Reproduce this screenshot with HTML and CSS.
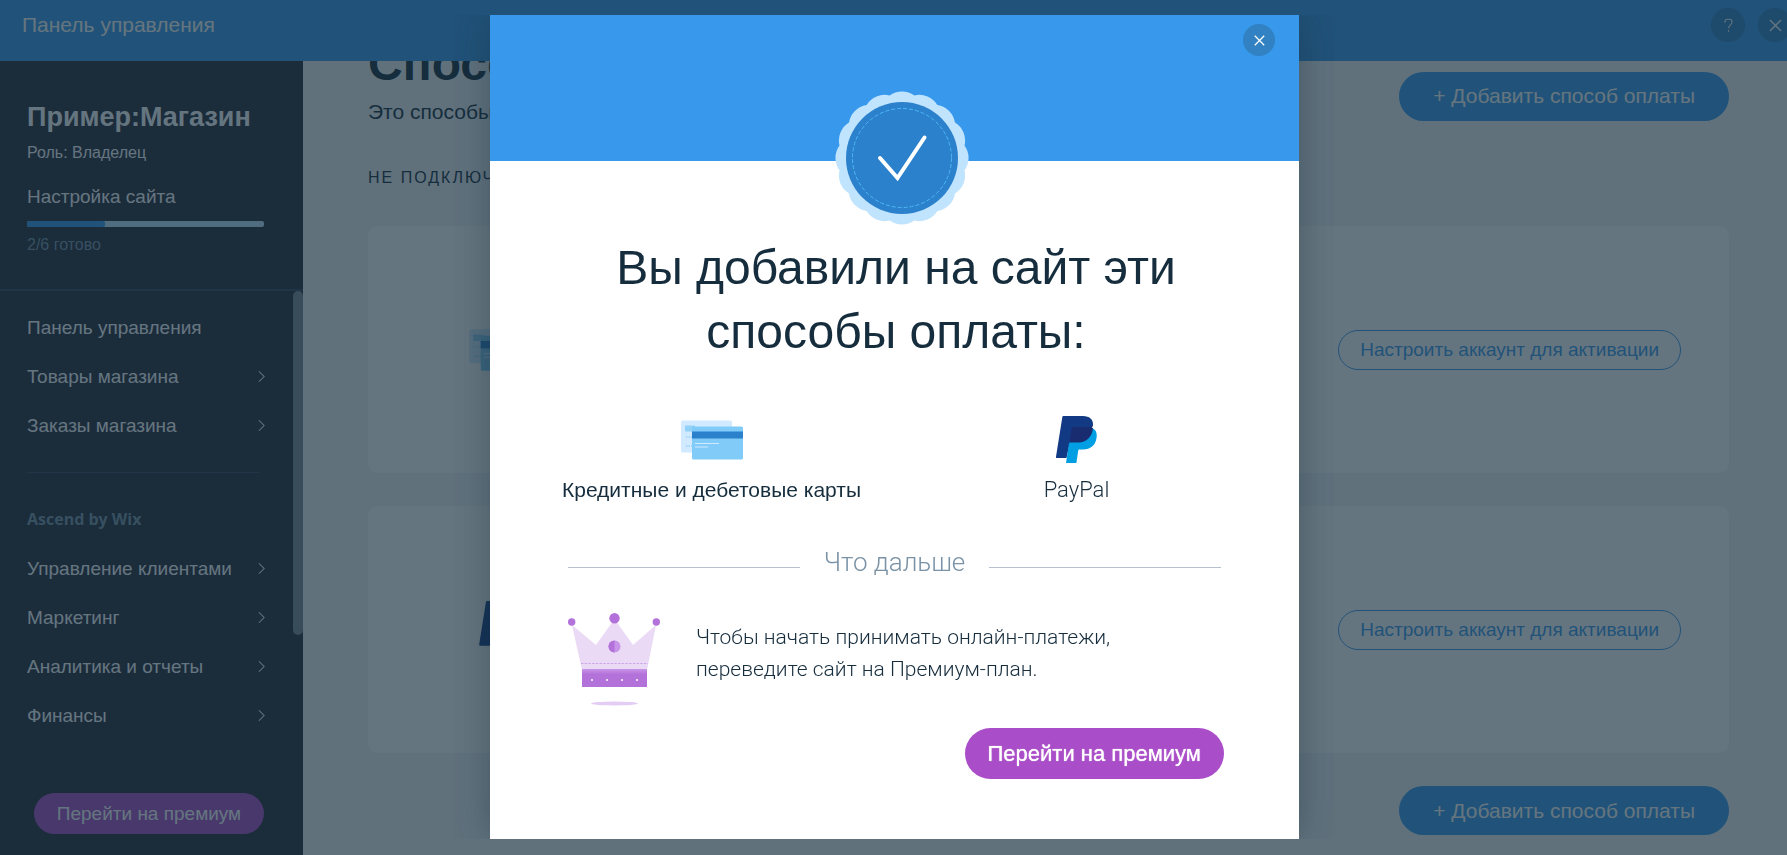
FILE: index.html
```html
<!DOCTYPE html>
<html lang="ru">
	<head>
		<meta charset="UTF-8" />
		<meta name="viewport" content="width=device-width, initial-scale=1.0" />
		<title>Панель управления</title>
		<link rel="stylesheet" href="styles.css">
	</head>

	<body>
		<!-- shared icons -->
		<svg class="sprite" aria-hidden="true">
			<symbol id="icon-chevron" viewBox="0 0 8 14">
				<path d="M1 1l6 6-6 6" fill="none" stroke="currentColor" stroke-width="1.2" />
			</symbol>
			<symbol id="icon-close" viewBox="0 0 14 14">
				<path d="M1 1l12 12M13 1L1 13" fill="none" stroke="currentColor" stroke-width="1.6" />
			</symbol>
			<symbol id="icon-cards" viewBox="0 0 62 39">
				<rect width="51" height="32" rx="1.5" fill="#d2eaff" />
				<rect x="4" y="5" width="10" height="6" fill="#92d2f9" />
				<path d="M5 16.5h7M5 25.5h7" stroke="#a9dafa" stroke-width="2" stroke-dasharray="1.5 1" />
				<rect x="11" y="6" width="51" height="33" rx="1.5" fill="#80cbf8" />
				<rect x="11" y="11" width="51" height="7" fill="#2b81cb" />
				<path d="M14 23h24M14 26.5h13" stroke="#d2eaff" stroke-width="1.2" />
			</symbol>
			<symbol id="icon-paypal" viewBox="0 0 41 48">
				<path d="M7.5 0H27c7 0 10.5 4 10 9.500L30 24 14 26l-3.500 16H1a1 1 0 0 1-1-1.200L6.300 1.200C6.400.5 6.800 0 7.500 0z" fill="#123984" />
				<path d="M37 12.500c3.400 1.500 4.200 5.500 3.500 9.500-1.200 7.500-6 11.500-13.500 11.500h-3.500c-.8 0-1.200.5-1.300 1.300l-1.800 12.200H10l3.200-21z" fill="#009ee3" />
				<path d="M17 11h16.500c1.500 0 2.500.4 3.500 1.300C36 21 30.500 26.500 22.500 26.500h-7.200c-1.200 0-1.900.5-2.100 1.500l2.500-15.800c.1-.7.600-1.200 1.300-1.200z" fill="#192c6f" />
			</symbol>
		</svg>

		<header class="topbar">
			<span class="topbar-title">Панель управления</span>
			<div class="topbar-actions">
				<button class="round-btn" type="button" aria-label="Помощь">
					<svg class="icon-help" viewBox="0 0 10 16">
						<path d="M1 5V4a3 3 0 0 1 3-3h2a3 3 0 0 1 3 3c0 3-4 3.500-4 7M5 13v2" fill="none" stroke="currentColor" stroke-width="1.200" />
					</svg>
				</button>
				<button class="round-btn" type="button" aria-label="Закрыть">
					<svg class="icon-close"><use href="#icon-close" /></svg>
				</button>
			</div>
		</header>

		<div class="layout">
			<aside class="sidebar">
				<div class="site">
					<h2 class="site-name">Пример:Магазин</h2>
					<p class="site-role">Роль: Владелец</p>
					<p class="site-setup">Настройка сайта</p>
					<div class="progress"><div class="progress-fill"></div></div>
					<p class="site-done">2/6 готово</p>
				</div>

				<nav class="menu">
					<a class="menu-item" href="#">Панель управления</a>
					<a class="menu-item" href="#">Товары магазина <svg class="chevron"><use href="#icon-chevron" /></svg></a>
					<a class="menu-item" href="#">Заказы магазина <svg class="chevron"><use href="#icon-chevron" /></svg></a>
					<hr class="menu-line" />
					<h3 class="menu-title">Ascend by Wix</h3>
					<a class="menu-item" href="#">Управление клиентами <svg class="chevron"><use href="#icon-chevron" /></svg></a>
					<a class="menu-item" href="#">Маркетинг <svg class="chevron"><use href="#icon-chevron" /></svg></a>
					<a class="menu-item" href="#">Аналитика и отчеты <svg class="chevron"><use href="#icon-chevron" /></svg></a>
					<a class="menu-item" href="#">Финансы <svg class="chevron"><use href="#icon-chevron" /></svg></a>
					<div class="scroll-thumb"></div>
				</nav>

				<button class="sidebar-btn" type="button">Перейти на премиум</button>
			</aside>

			<main class="content">
				<div class="content-head">
					<div>
						<h1 class="content-title">Способы оплаты</h1>
						<p class="content-text">Это способы оплаты на сайте.</p>
					</div>
					<button class="add-btn" type="button">+ Добавить способ оплаты</button>
				</div>
				<h2 class="section-title">Не подключено</h2>
				<div class="card">
					<svg class="cards-icon"><use href="#icon-cards" /></svg>
					<button class="setup-btn" type="button">Настроить аккаунт для активации</button>
				</div>
				<div class="card">
					<svg class="paypal-icon"><use href="#icon-paypal" /></svg>
					<button class="setup-btn" type="button">Настроить аккаунт для активации</button>
				</div>
				<button class="add-btn" type="button">+ Добавить способ оплаты</button>
			</main>
		</div>

		<div class="overlay">
			<div class="modal" role="dialog" aria-modal="true" aria-labelledby="modal-title">
				<div class="modal-head">
					<button class="modal-close" type="button" aria-label="Закрыть">
						<svg class="icon-close-small"><use href="#icon-close" /></svg>
					</button>
					<svg class="badge" viewBox="0 0 134 134">
						<path d="M54.6 4.500A21 21 0 0 1 79.400 4.500A21 21 0 0 1 102.400 14A21 21 0 0 1 120 31.600A21 21 0 0 1 129.500 54.600A21 21 0 0 1 129.500 79.400A21 21 0 0 1 120 102.400A21 21 0 0 1 102.400 120A21 21 0 0 1 79.400 129.500A21 21 0 0 1 54.600 129.500A21 21 0 0 1 31.600 120A21 21 0 0 1 14 102.400A21 21 0 0 1 4.500 79.400A21 21 0 0 1 4.500 54.600A21 21 0 0 1 14 31.600A21 21 0 0 1 31.600 14A21 21 0 0 1 54.600 4.500z" fill="#c1e4fe" />
						<circle cx="67" cy="67" r="56" fill="#2b81cb" />
						<circle cx="67" cy="67" r="49.5" fill="none" stroke="#4eb7f5" stroke-dasharray="4 2" />
						<path d="M45 67l17.5 20L89.5 46.5" fill="none" stroke="#fff" stroke-width="4" stroke-linecap="round" />
					</svg>
				</div>

				<div class="modal-body">
					<h2 class="modal-title" id="modal-title">Вы добавили на сайт эти способы оплаты:</h2>

					<div class="methods">
						<div class="method">
							<svg class="cards-icon"><use href="#icon-cards" /></svg>
							<span>Кредитные и дебетовые карты</span>
						</div>
						<div class="method">
							<svg class="paypal-icon"><use href="#icon-paypal" /></svg>
							<span class="method-light">PayPal</span>
						</div>
					</div>

					<div class="next">Что дальше</div>

					<div class="premium">
						<svg class="crown" viewBox="0 0 92 93">
							<defs>
								<linearGradient id="band" x1="0" y1="0" x2="0" y2="1">
									<stop offset="0" stop-color="#c795e8" />
									<stop offset=".3" stop-color="#b371da" />
								</linearGradient>
							</defs>
							<path d="M4 12L28 32 46.5 6 65 32 88 12 79 57H14z" fill="#ebdaf6" />
							<circle cx="3.7" cy="9" r="3.7" fill="#b371da" />
							<circle cx="88.3" cy="9" r="3.7" fill="#b371da" />
							<circle cx="46.5" cy="5.2" r="5.2" fill="#b371da" />
							<circle cx="46.5" cy="33.5" r="6" fill="#c794e8" />
							<path d="M46.5 27.5a6 6 0 0 0 0 12z" fill="#b371da" />
							<path d="M13 50.5h67" stroke="#cfa6ea" stroke-dasharray="2.5 1.2" />
							<rect x="14" y="56" width="65" height="18" fill="url(#band)" />
							<path d="M23 67h2M38 67h2M53 67h2M68 67h2" stroke="#ebdaf6" stroke-width="2" />
							<ellipse cx="46.5" cy="90.5" rx="23.5" ry="2" fill="#e3cdf4" />
						</svg>
						<p class="premium-text">Чтобы начать принимать онлайн-платежи, переведите сайт на Премиум-план.</p>
					</div>

					<button class="premium-btn" type="button">Перейти на премиум</button>
				</div>
			</div>
		</div>
	</body>
</html>
```

FILE: styles.css
```css
* {
	box-sizing: border-box;
}

html,
body {
	height: 100%;
	margin: 0;
	overflow: hidden;
}

body {
	display: flex;
	flex-direction: column;
	color: #162d3d;
	font-family: "Liberation Sans", Arial, sans-serif;
	background-color: #f0f4f7;
}

h1,
h2,
h3,
p {
	margin: 0;
}

button {
	border: 0;
	padding: 0;
	font-family: inherit;
	cursor: pointer;
}

.sprite {
	position: absolute;
	width: 0;
	height: 0;
}

/* top bar */

.topbar {
	position: relative;
	z-index: 1;
	display: flex;
	flex-shrink: 0;
	justify-content: space-between;
	align-items: flex-start;
	height: 61px;
	padding: 8px 0 0 22px;
	color: #fff;
	background-color: #3899ec;
}

.topbar-title {
	font-size: 21px;
	line-height: 34px;
}

.topbar-actions {
	display: flex;
	gap: 13px;
	margin-right: -5px;
}

.round-btn {
	display: flex;
	justify-content: center;
	align-items: center;
	width: 34px;
	height: 34px;
	border-radius: 50%;
	color: #fff;
	background-color: #2f81c6;
}

.icon-help {
	width: 9px;
	height: 15px;
}

.icon-close {
	width: 13px;
	height: 13px;
}

/* sidebar */

.layout {
	display: flex;
	flex: 1;
	min-height: 0;
}

.sidebar {
	display: flex;
	flex-direction: column;
	flex-shrink: 0;
	width: 303px;
	color: #fff;
	background-color: #26293a;
}

.site {
	padding: 38px 39px 32px 27px;
	border-bottom: 2px solid #3a4562;
}

.site-name {
	font-size: 27px;
	line-height: 36px;
}

.site-role {
	margin-top: 6px;
	font-size: 16px;
	line-height: 24px;
}

.site-setup {
	margin-top: 20px;
	font-size: 19px;
	line-height: 24px;
}

.progress {
	height: 6px;
	margin-top: 12px;
	border-radius: 2px;
	background-color: #c1e4fe;
}

.progress-fill {
	width: 33%;
	height: 100%;
	border-radius: 2px;
	background-color: #3899ec;
}

.site-done {
	margin-top: 6px;
	color: #7a92a5;
	font-size: 16px;
	line-height: 24px;
}

.menu {
	position: relative;
	flex: 1;
	padding: 12px 38px 0 27px;
}

.menu-item {
	display: flex;
	justify-content: space-between;
	align-items: center;
	height: 49px;
	color: #fff;
	font-size: 19px;
	text-decoration: none;
}

.chevron {
	width: 7px;
	height: 13px;
}

.menu-line {
	height: 1px;
	margin: 22px 5px 22px 0;
	border: 0;
	background-color: #3a4562;
}

.menu-title {
	color: #7a92a5;
	font-family: "Open Sans", sans-serif;
	font-size: 16px;
	font-weight: 700;
	line-height: 49px;
}

.scroll-thumb {
	position: absolute;
	top: 0;
	right: 0;
	width: 10px;
	height: 344px;
	border-radius: 5px;
	background-color: #7f8690;
}

.sidebar-btn {
	height: 41px;
	margin: 0 39px 21px 34px;
	border-radius: 21px;
	color: #fff;
	font-size: 19px;
	background-color: #aa4dc8;
}

/* page content */

.content {
	flex: 1;
	min-width: 0;
	padding: 0 58px 0 65px;
	margin-top: -29px;
}

.content-head {
	display: flex;
	justify-content: space-between;
	align-items: center;
}

.content-title {
	font-size: 48px;
	line-height: 64px;
}

.content-text {
	font-size: 21px;
	line-height: 32px;
}

.add-btn {
	display: block;
	height: 49px;
	margin-left: auto;
	padding: 0 34px;
	border-radius: 25px;
	color: #fff;
	font-size: 21px;
	background-color: #3899ec;
}

.content-head .add-btn {
	margin-top: 32px;
}

.section-title {
	margin: 38px 0 36px;
	font-size: 16px;
	font-weight: 400;
	letter-spacing: 2px;
	line-height: 24px;
	text-transform: uppercase;
}

.card {
	display: flex;
	justify-content: space-between;
	align-items: center;
	height: 247px;
	margin-bottom: 33px;
	padding: 0 48px 0 101px;
	border-radius: 10px;
	background-color: #fff;
}

.cards-icon {
	width: 62px;
	height: 39px;
}

.paypal-icon {
	width: 41px;
	height: 48px;
}

.card .cards-icon {
	width: 66px;
	height: 42px;
}

.card .paypal-icon {
	width: 44px;
	height: 51px;
	margin: 0 0 6px 10px;
}

.setup-btn {
	height: 40px;
	padding: 0 21px;
	border: 1px solid #3899ec;
	border-radius: 20px;
	color: #3899ec;
	font-size: 19px;
	background-color: transparent;
}

/* modal */

.overlay {
	position: fixed;
	inset: 0;
	z-index: 2;
	display: flex;
	justify-content: center;
	align-items: flex-start;
	padding: 15px 14px 16px 16px;
	background-color: rgba(22, 45, 61, 0.66);
}

.modal {
	width: 809px;
	background-color: #fff;
	box-shadow: 0 0 36px rgba(22, 45, 61, 0.4);
	clip-path: inset(0 -36px);
}

.modal-head {
	position: relative;
	display: flex;
	justify-content: flex-end;
	height: 146px;
	padding: 9px 24px;
	background-color: #3899ec;
}

.modal-close {
	display: flex;
	justify-content: center;
	align-items: center;
	width: 32px;
	height: 32px;
	border-radius: 50%;
	color: #fff;
	background-color: #3181c3;
}

.icon-close-small {
	width: 11px;
	height: 11px;
}

.badge {
	position: absolute;
	bottom: -64px;
	left: calc(50% - 60px);
	width: 134px;
	height: 134px;
}

.modal-body {
	display: flex;
	flex-direction: column;
	padding: 75px 75px 60px 78px;
}

.modal-title {
	padding: 0 40px;
	font-size: 48px;
	font-weight: 400;
	line-height: 64px;
	text-align: center;
}

.methods {
	display: grid;
	grid-template-columns: 1fr 1fr;
	margin: 52px -35px 0 -39px;
}

.method {
	display: flex;
	flex-direction: column;
	align-items: center;
	font-size: 21px;
	line-height: 32px;
}

.method svg {
	margin-bottom: 10px;
}

.method .cards-icon {
	height: 48px;
}

.method-light {
	font-family: Roboto, sans-serif;
	font-size: 22px;
	font-weight: 300;
}

.next {
	display: flex;
	gap: 24px;
	margin: 38px 3px 0 0;
	color: #7a92a5;
	font-family: Roboto, sans-serif;
	font-size: 26px;
	font-weight: 300;
	line-height: 36px;
}

.next::before,
.next::after {
	content: "";
	flex: 1;
	height: 1px;
	margin-top: 23px;
	background-color: #b6c1cd;
}

.premium {
	display: flex;
	align-items: flex-start;
	gap: 36px;
	margin-top: 33px;
}

.crown {
	flex-shrink: 0;
	width: 92px;
	height: 93px;
}

.premium-text {
	max-width: 440px;
	margin-top: 8px;
	font-family: Roboto, sans-serif;
	font-size: 21px;
	font-weight: 300;
	line-height: 32px;
}

.premium-btn {
	align-self: flex-end;
	height: 51px;
	margin-top: 22px;
	padding: 0 23px;
	border-radius: 26px;
	color: #fff;
	font-size: 22px;
	text-shadow: 0 0 1px #fff;
	background-color: #aa4dc8;
}
```
